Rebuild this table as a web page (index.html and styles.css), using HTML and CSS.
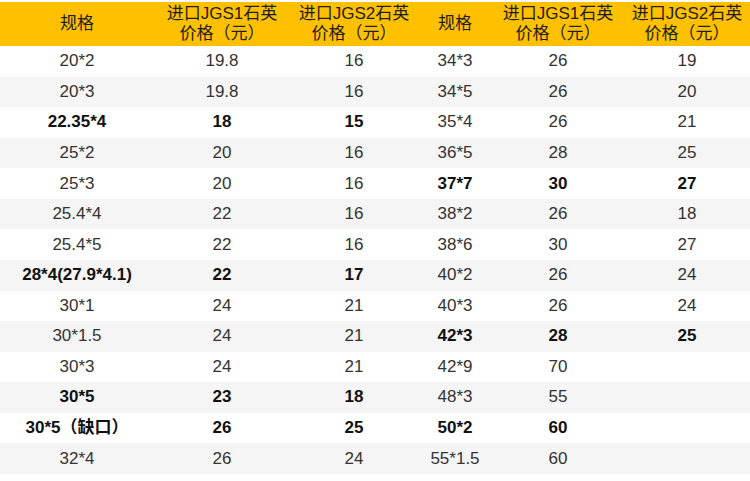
FILE: index.html
```html
<!DOCTYPE html>
<html lang="zh">
<head>
<meta charset="utf-8">
<link rel="stylesheet" href="styles.css">
</head>
<body>
<div class="table">
  <div class="row head">
    <div>规格</div><div>进口JGS1石英<br>价格（元）</div><div>进口JGS2石英<br>价格（元）</div>
    <div>规格</div><div>进口JGS1石英<br>价格（元）</div><div>进口JGS2石英<br>价格（元）</div>
  </div>
  <div class="row"><div>20*2</div><div>19.8</div><div>16</div><div>34*3</div><div>26</div><div>19</div></div>
  <div class="row alt"><div>20*3</div><div>19.8</div><div>16</div><div>34*5</div><div>26</div><div>20</div></div>
  <div class="row"><div class="b">22.35*4</div><div class="b">18</div><div class="b">15</div><div>35*4</div><div>26</div><div>21</div></div>
  <div class="row alt"><div>25*2</div><div>20</div><div>16</div><div>36*5</div><div>28</div><div>25</div></div>
  <div class="row"><div>25*3</div><div>20</div><div>16</div><div class="b">37*7</div><div class="b">30</div><div class="b">27</div></div>
  <div class="row alt"><div>25.4*4</div><div>22</div><div>16</div><div>38*2</div><div>26</div><div>18</div></div>
  <div class="row"><div>25.4*5</div><div>22</div><div>16</div><div>38*6</div><div>30</div><div>27</div></div>
  <div class="row alt"><div class="b">28*4(27.9*4.1)</div><div class="b">22</div><div class="b">17</div><div>40*2</div><div>26</div><div>24</div></div>
  <div class="row"><div>30*1</div><div>24</div><div>21</div><div>40*3</div><div>26</div><div>24</div></div>
  <div class="row alt"><div>30*1.5</div><div>24</div><div>21</div><div class="b">42*3</div><div class="b">28</div><div class="b">25</div></div>
  <div class="row"><div>30*3</div><div>24</div><div>21</div><div>42*9</div><div>70</div><div></div></div>
  <div class="row alt"><div class="b">30*5</div><div class="b">23</div><div class="b">18</div><div>48*3</div><div>55</div><div></div></div>
  <div class="row"><div class="b">30*5（缺口）</div><div class="b">26</div><div class="b">25</div><div class="b">50*2</div><div class="b">60</div><div></div></div>
  <div class="row alt"><div>32*4</div><div>26</div><div>24</div><div>55*1.5</div><div>60</div><div></div></div>
</div>
</body>
</html>
```
FILE: styles.css
```css
html, body {
  margin: 0;
  padding: 0;
  background: #ffffff;
}
body {
  padding-top: 2px;
  font-family: "Liberation Sans", "Noto Sans CJK SC", sans-serif;
  color: #333333;
}
.table {
  width: 750px;
}
.row {
  display: grid;
  grid-template-columns: 154px 136px 128px 74px 132px 126px;
  height: 30.57px;
  align-items: center;
  font-size: 17px;
  line-height: 20px;
  background: #ffffff;
}
.row > div {
  text-align: center;
  white-space: nowrap;
}
.row.alt {
  background: #f5f5f5;
}
.row.head {
  height: 44px;
  background: #ffc000;
  font-size: 17px;
  line-height: 20px;
  color: #1e1e1e;
}
.b {
  font-weight: bold;
  color: #111111;
}
```
